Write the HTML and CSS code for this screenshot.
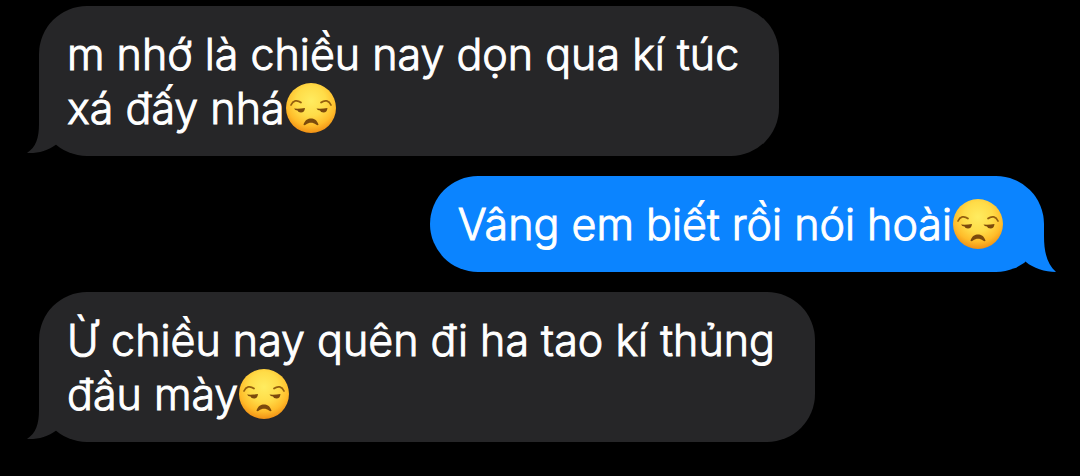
FILE: index.html
```html
<!DOCTYPE html>
<html lang="vi">
<head>
  <meta charset="UTF-8"/>
  <meta name="viewport" content="width=device-width, initial-scale=1.0"/>
  <title>Messages</title>
  <link rel="stylesheet" href="styles.css">
</head>
<body>

  <!-- Shared drawings: emoji and bubble tails -->
  <svg class="defs" aria-hidden="true">
    <defs>
      <radialGradient id="face-fill" cx="50%" cy="36%" r="66%">
        <stop offset="0" stop-color="#ffec60"/>
        <stop offset="0.45" stop-color="#ffdc48"/>
        <stop offset="0.75" stop-color="#ffbc2a"/>
        <stop offset="1" stop-color="#ee8a12"/>
      </radialGradient>
      <symbol id="unamused" viewBox="0 0 52 52">
        <circle cx="26" cy="26" r="25" fill="url(#face-fill)"/>
        <!-- brows -->
        <path d="M6 23C8 18.5 12 17.5 16 20.5M36 20.5C40 17.5 44 18.5 46 23" fill="none" stroke="#95600f" stroke-width="1.7" stroke-linecap="round"/>
        <!-- eyes looking sideways -->
        <path d="M9 26.5Q14 27 20 26Q19.5 30.5 16 30.5Q13 30.5 12.5 28.5Q10 28.3 9 26.5ZM31.5 26.5Q36.5 27 42.500 26Q42 30.5 38.5 30.5Q35.5 30.5 35 28.5Q32.5 28.3 31.5 26.5Z" fill="#7c4a0c"/>
        <!-- mouth -->
        <path d="M18.5 42.5C20 38 23 36.5 26 36.5C29 36.5 32 38 33.5 42.5C33.5 43.5 32 43.5 31 42.5C28 40 24 40 21 42.5C20 43.5 18.5 43.5 18.5 42.5Z" fill="#7c4a0c"/>
      </symbol>
      <symbol id="tail" viewBox="0 0 30 48">
        <path d="M12 0V16C12 30 9 39 0 45C11 45.5 20 43 30 36V0Z" fill="currentColor"/>
      </symbol>
      <symbol id="tail-sent" viewBox="0 0 30 48">
        <path d="M18 0V12C18 28 21 40 30 48C19 48 7 44 0 38V0Z" fill="currentColor"/>
      </symbol>
    </defs>
  </svg>

  <main class="chat">
    <div class="bubble received">
      <p>m nhớ là chiều nay dọn qua kí túc<br>xá đấy nhá<svg class="emoji" role="img" aria-label="unamused"><use href="#unamused"/></svg></p>
      <svg class="tail" aria-hidden="true"><use href="#tail"/></svg>
    </div>
    <div class="bubble sent">
      <p>Vâng em biết rồi nói hoài<svg class="emoji" role="img" aria-label="unamused"><use href="#unamused"/></svg></p>
      <svg class="tail" aria-hidden="true"><use href="#tail-sent"/></svg>
    </div>
    <div class="bubble received">
      <p>Ừ chiều nay quên đi ha tao kí thủng<br>đầu mày<svg class="emoji" role="img" aria-label="unamused"><use href="#unamused"/></svg></p>
      <svg class="tail" aria-hidden="true"><use href="#tail"/></svg>
    </div>
  </main>

</body>
</html>
```
FILE: styles.css
```css
body {
  margin: 0;
  background-color: #000;
  font-family: Inter, "Noto Sans", sans-serif;
  font-size: 43px;
  font-weight: 300;
  line-height: 54px;
}

.defs {
  position: absolute;
  width: 0;
  height: 0;
}

.chat {
  display: flex;
  flex-direction: column;
  align-items: flex-start;
  gap: 20px;
  padding: 6px 36px 34px 39px;
}

/* Bubbles */
.bubble {
  position: relative;
  padding: 21px 40px 21px 28px;
  border-radius: 48px;
}

.bubble p {
  margin: 0;
  color: #fff;
  -webkit-text-stroke: 1px #fff; /* between light and regular */
}

.received {
  background-color: #262628;
  color: #262628;
}

.sent {
  align-self: flex-end;
  background-color: #0b84ff;
  color: #0b84ff;
}

.emoji {
  width: 52px;
  height: 52px;
  vertical-align: -10px;
}

/* Tail */
.tail {
  position: absolute;
  bottom: 0;
  left: -12px;
  width: 30px;
  height: 48px;
}

.sent .tail {
  right: -12px;
  left: auto;
}
```
